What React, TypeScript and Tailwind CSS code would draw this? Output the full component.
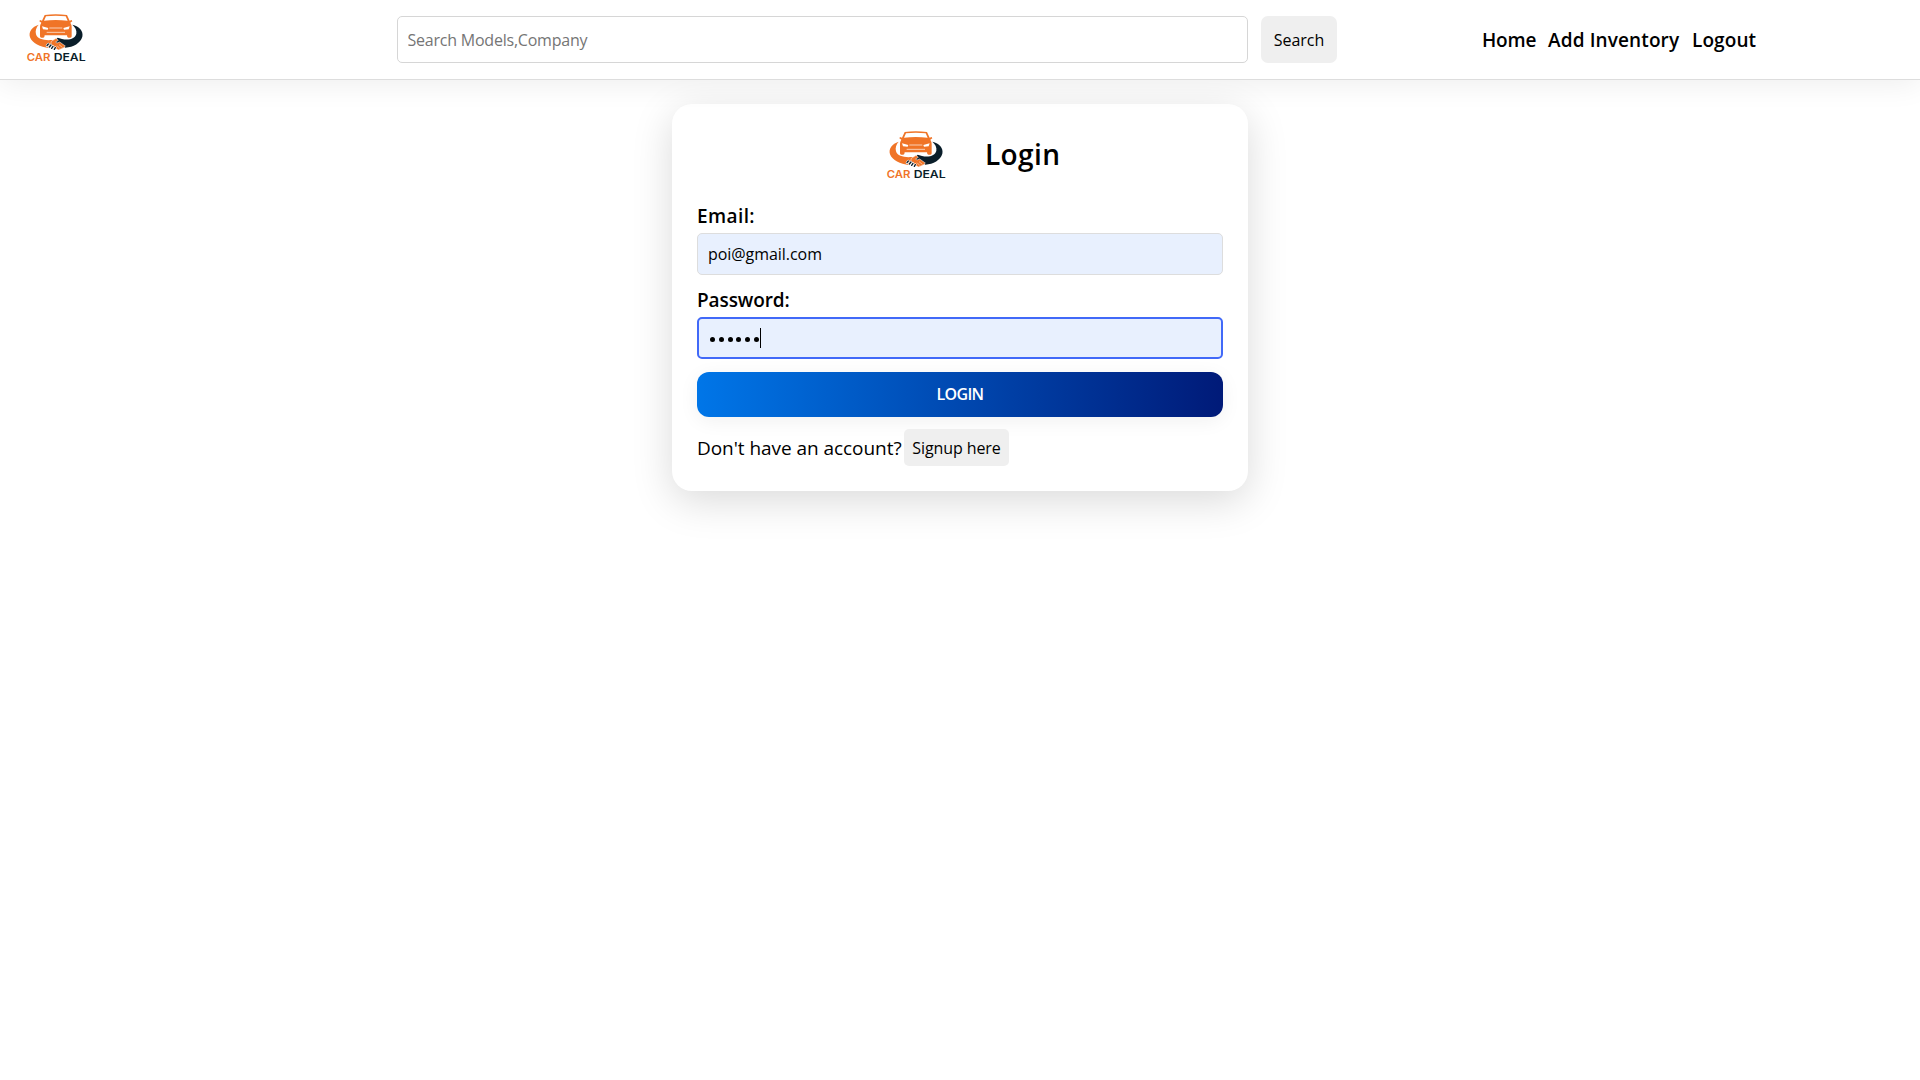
function Logo() {
  return (
    <svg viewBox="0 0 192 162" className="h-[54px] w-16 shrink-0" aria-label="Car Deal">
      {/* arms */}
      <path d="M44 44C24 50 13 65 18 82C25 100 48 112 76 114L84 107L98 109L100 97L84 90C62 92 40 88 36 73C33 62 37 52 44 44Z" fill="#f07427" />
      <path d="M145 44C166 49 179 63 175 80C170 99 148 111 124 113L106 98L96 100L91 94L101 83L114 87C136 92 154 85 157 71C159 60 153 51 145 44Z" fill="#0a1e2a" />
      {/* car */}
      <path d="M62 15Q95 10 129 15L137 32L143 30L145 34L139 38Q143 44 143 51V79Q143 83 139 83H133Q129 83 129 76H62Q62 83 58 83H52Q48 83 48 79V51Q48 44 52 38L46 34L48 30L54 32Z" fill="#f07427" />
      <path d="M66 19Q95 15 125 19L131 32Q95 28 60 32Z" fill="#fff" />
      <path d="M54 49L73 54L71 59L57 58Z M137 49L118 54L120 59L134 58Z" fill="#fff" />
      <path d="M76 54H115M68 67H123" stroke="#fff" strokeWidth="2" fill="none" />
      {/* handshake */}
      <path d="M82 94L96 85L103 91L95 96L99 99L107 96L124 108L119 113L111 117L104 120L96 116L79 108Z" fill="#f07427" stroke="#fff" strokeWidth="1.5" />
      <path d="M105 104L115 112M99 107L108 116" stroke="#fff" strokeWidth="1.5" />
      <path d="M69 107L73 102M76 111L81 105M83 115L87 109M91 118L94 113" stroke="#fff" strokeWidth="7.5" strokeLinecap="round" />
      <path d="M69 107L73 102M76 111L81 105M83 115L87 109M91 118L94 113" stroke="#0a1e2a" strokeWidth="4" strokeLinecap="round" />
      <text x="8" y="152" textLength="71" lengthAdjust="spacingAndGlyphs" fontFamily="Inter, sans-serif" fontWeight="600" fontSize="31" fill="#f07427">CAR</text>
      <text x="89" y="152" textLength="96" lengthAdjust="spacingAndGlyphs" fontFamily="Inter, sans-serif" fontWeight="600" fontSize="31" fill="#0a1e2a">DEAL</text>
    </svg>
  );
}

export default function App() {
  return (
    <div className="min-h-screen bg-white font-['Open_Sans',sans-serif] text-base text-black">
      <header className="relative z-10 flex h-20 items-center border-b border-[#dddddd] bg-white pl-6 shadow-[0_4px_30px_rgba(0,0,0,0.07)]">
        <div className="-mt-[5px]">
          <Logo />
        </div>
        <input
          type="text"
          placeholder="Search Models,Company"
          className="ml-[309px] h-[47px] w-[851px] rounded-[5px] border border-[#d6d6d6] bg-white px-[9.5px] tracking-[-0.22px] outline-none placeholder:text-[#757575]"
        />
        <button className="ml-[13px] h-[47px] w-[76px] rounded-[7px] bg-[#efefef]">Search</button>
        <nav className="ml-[145px] flex gap-3 pt-0.5 text-[19px] font-semibold whitespace-nowrap">
          <a className="w-[54px] tracking-[-0.2px]">Home</a>
          <a className="w-[132px] tracking-[0.12px]">Add Inventory</a>
          <a className="tracking-[0.1px]">Logout</a>
        </nav>
      </header>

      <main className="mx-auto mt-6 w-[576px] rounded-[20px] bg-white p-[25px] shadow-[0_10px_40px_rgba(0,0,0,0.15)]">
        <div className="flex h-[50px] items-center pl-[187px]">
          <Logo />
          <h1 className="ml-[37px] text-[28px] leading-[50px] font-semibold tracking-[0.4px]">Login</h1>
        </div>
        <form className="mt-[25px] flex flex-col" onSubmit={(e) => e.preventDefault()}>
          <label className="text-[19px] leading-6 font-semibold tracking-[0.4px]">Email:</label>
          <input
            type="text"
            defaultValue="poi@gmail.com"
            className="mt-[5px] h-[42px] rounded-[5px] border border-[#dddddd] bg-[#e8f0fe] px-[10px] tracking-[-0.05px] outline-none"
          />
          <label className="mt-[13px] text-[19px] leading-6 font-semibold tracking-[-0.1px]">Password:</label>
          <div className="mt-[5px] flex h-[42px] items-center rounded-[5px] border-2 border-[#4169f8] bg-[#e8f0fe] pl-[11px]">
            <div className="flex gap-[3.8px] pt-[3px]">
              {[0, 1, 2, 3, 4, 5].map((i) => (
                <span key={i} className="size-[5px] rounded-full bg-black" />
              ))}
            </div>
            <span className="ml-px h-5 w-px bg-black" />
          </div>
          <button className="mt-[13px] h-[45px] rounded-xl bg-[linear-gradient(to_right,#0076e8,#001a78)] pb-0.5 font-semibold tracking-[-0.7px] text-white shadow-[0_4px_20px_rgba(0,0,0,0.06)]">
            LOGIN
          </button>
        </form>
        <div className="mt-3 flex h-[37px] items-center">
          <span className="w-[207px] pt-0.5 text-[19px] tracking-[-0.05px] whitespace-nowrap">Don't have an account?</span>
          <button className="h-[37px] w-[105px] rounded-[5px] bg-[#efefef] tracking-[-0.1px]">Signup here</button>
        </div>
      </main>
    </div>
  );
}
